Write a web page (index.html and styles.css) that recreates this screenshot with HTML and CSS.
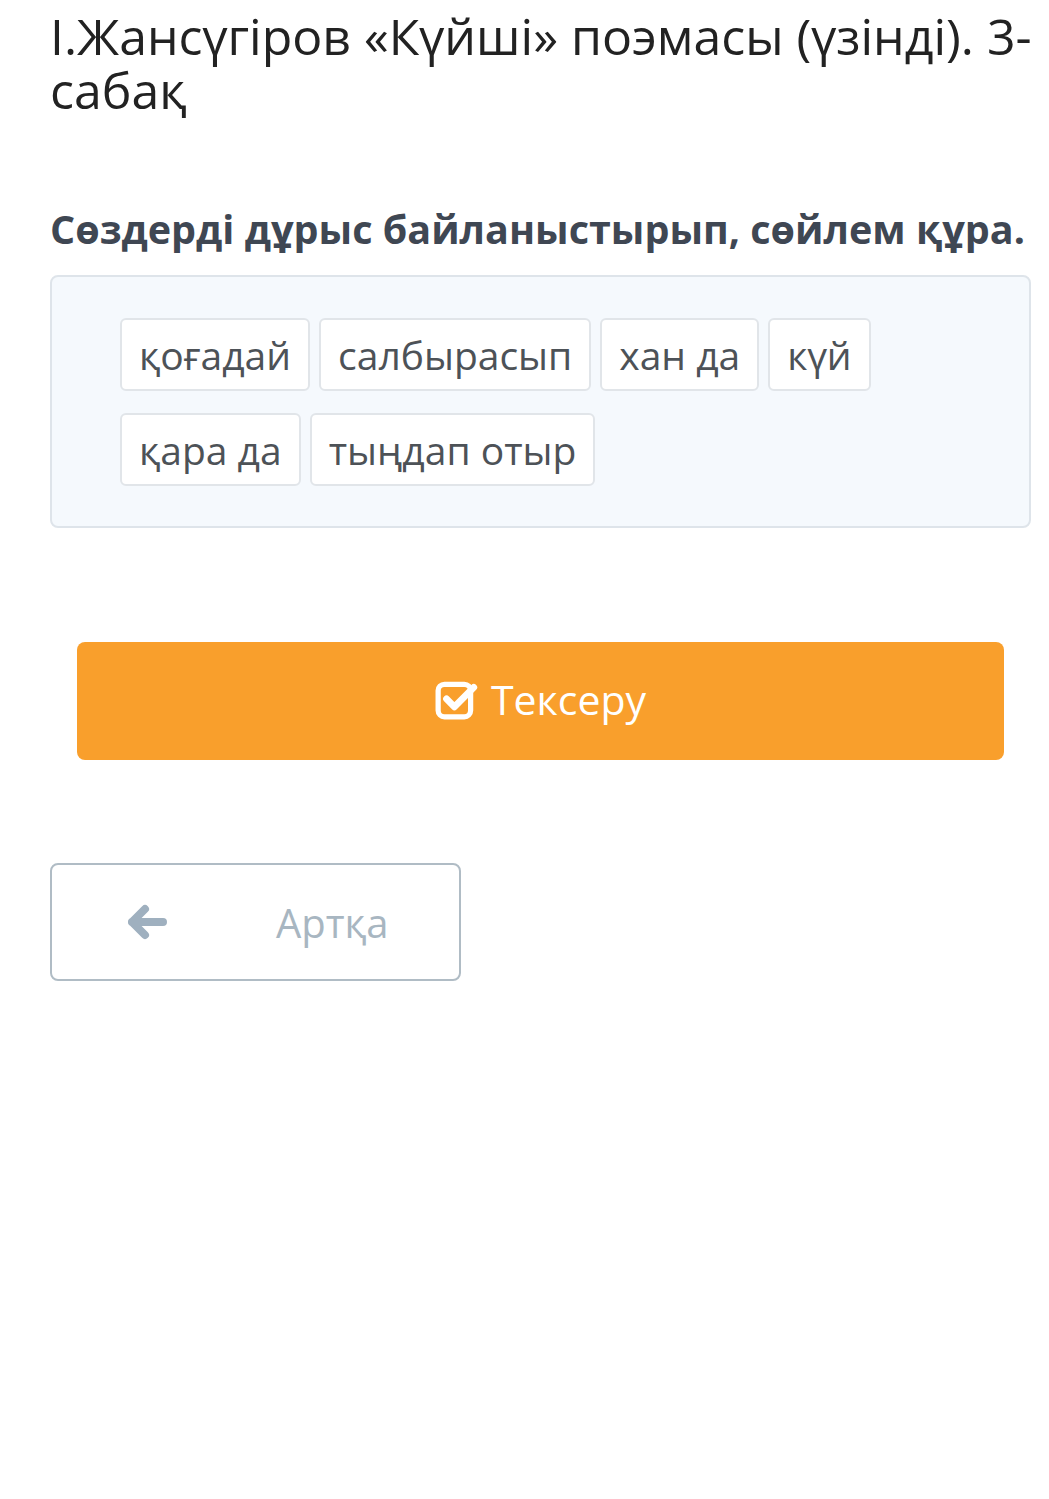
FILE: index.html
```html
<!DOCTYPE html>
<html lang="kk">
<head>
  <meta charset="UTF-8">
  <meta name="viewport" content="width=device-width, initial-scale=1.0">
  <title>Күйші</title>
  <link rel="stylesheet" href="styles.css">
</head>
<body>
  <div class="page">
    <h1 class="title">І.Жансүгіров «Күйші» поэмасы (үзінді). 3-<wbr>сабақ</h1>

    <h2 class="task">Сөздерді дұрыс байланыстырып, сөйлем құра.</h2>

    <!-- сөздер -->
    <div class="words">
      <span class="word">қоғадай</span>
      <span class="word">салбырасып</span>
      <span class="word">хан да</span>
      <span class="word">күй</span>
      <span class="word">қара да</span>
      <span class="word">тыңдап отыр</span>
    </div>

    <button class="check-btn" type="button">
      <svg class="check-icon" viewBox="0 0 42 40" width="44" height="42">
        <rect x="3" y="5" width="31" height="31" rx="6" fill="none" stroke="#fff" stroke-width="5"/>
        <path d="M11 19 L18.5 26.5 L37 8" fill="none" stroke="#fff" stroke-width="6.5" stroke-linecap="round" stroke-linejoin="round"/>
      </svg>
      Тексеру
    </button>

    <button class="back-btn" type="button">
      <svg class="back-icon" viewBox="0 0 40 36" width="40" height="36">
        <path d="M4 18 L17 5 M4 18 L17 31 M4 18 H35" fill="none" stroke="#9fb0bf" stroke-width="8" stroke-linecap="round" stroke-linejoin="round"/>
      </svg>
      <span class="back-text">Артқа</span>
    </button>
  </div>
</body>
</html>
```

FILE: styles.css
```css
body {
  margin: 0;
  padding: 0;
  background-color: #fff;
  font-family: "Open Sans", "Noto Sans", sans-serif;
}
.page {
  padding: 9px 8px 0 50px;
}
.title {
  font-size: 50px;
  font-weight: 400;
  line-height: 54px;
  color: #222;
  margin: 0 0 88px 0;
}
.task {
  font-size: 39.5px;
  font-weight: 700;
  color: #3f4753;
  margin: 0 0 22px 0;
  line-height: 48px;
  white-space: nowrap;
}
.words {
  display: flex;
  flex-wrap: wrap;
  gap: 22px 9px;
  margin-right: 10px;
  padding: 41px 100px 40px 68px;
  background-color: #f5f9fd;
  border: 2px solid #dee4ea;
  border-radius: 8px;
}
.word {
  display: inline-block;
  padding: 0 17px;
  height: 69px;
  line-height: 69px;
  font-size: 39px;
  color: #4d5257;
  background-color: #fff;
  border: 2px solid #e1e5e9;
  border-radius: 6px;
}
.check-btn {
  display: flex;
  align-items: center;
  justify-content: center;
  gap: 12px;
  width: 927px;
  height: 118px;
  margin: 114px 0 0 27px;
  background-color: #f99f2c;
  color: #fff;
  border: none;
  border-radius: 8px;
  font-family: inherit;
  font-size: 41px;
  padding: 0 0 4px 0;
}
.check-icon {
  margin-top: 2px;
}
.back-btn {
  display: flex;
  align-items: center;
  width: 411px;
  height: 118px;
  margin-top: 103px;
  padding: 0 0 0 76px;
  background-color: #fff;
  border: 2px solid #b0bcc5;
  border-radius: 8px;
  font-family: inherit;
  font-size: 40px;
  color: #a8b6c1;
}
.back-icon {
  margin-right: 108px;
}
```
